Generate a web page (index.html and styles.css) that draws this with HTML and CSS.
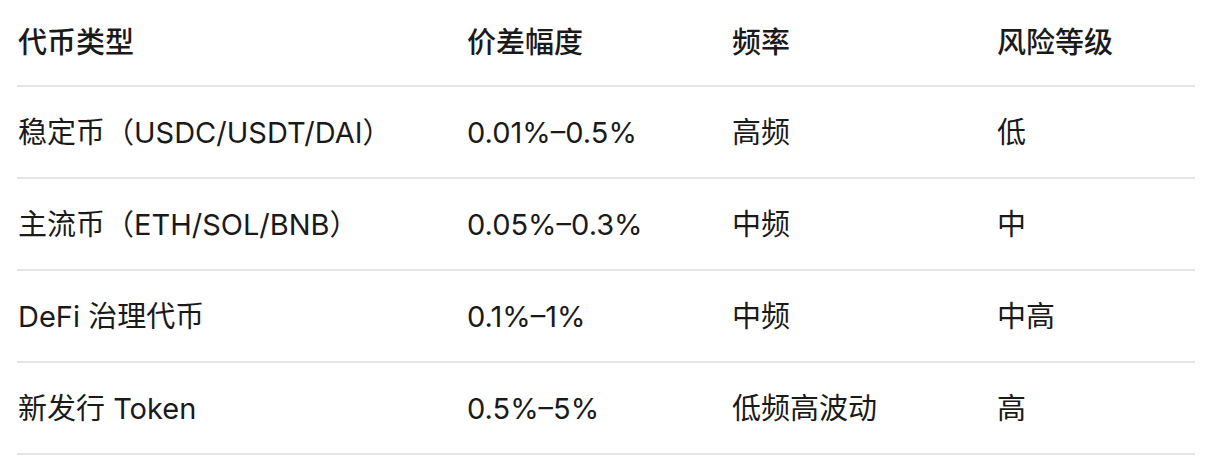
FILE: index.html
```html
<!DOCTYPE html>
<html lang="zh-CN">
<head>
<meta charset="utf-8">
<link rel="stylesheet" href="styles.css">
</head>
<body>
<table class="tbl">
  <thead>
    <tr><th class="c1">代币类型</th><th class="c2">价差幅度</th><th class="c3">频率</th><th class="c4">风险等级</th></tr>
  </thead>
  <tbody>
    <tr><td>稳定币（USDC/USDT/DAI）</td><td>0.01%–0.5%</td><td>高频</td><td>低</td></tr>
    <tr><td>主流币（ETH/SOL/BNB）</td><td>0.05%–0.3%</td><td>中频</td><td>中</td></tr>
    <tr><td>DeFi 治理代币</td><td>0.1%–1%</td><td>中频</td><td>中高</td></tr>
    <tr><td>新发行 Token</td><td>0.5%–5%</td><td>低频高波动</td><td>高</td></tr>
  </tbody>
</table>
</body>
</html>
```
FILE: styles.css
```css
html, body { margin: 0; padding: 0; background: #fff; }
body {
  padding: 0 17px;
  font-family: Inter, "Noto Sans CJK SC", sans-serif;
  color: #1a1a1a;
  font-size: 29px;
}
.tbl {
  width: 1178px;
  border-collapse: collapse;
  table-layout: fixed;
}
.tbl th, .tbl td {
  text-align: left;
  padding: 0 0 0 1px;
  border-bottom: 2px solid #e5e5e5;
  line-height: 44px;
  white-space: nowrap;
}
.tbl th {
  font-weight: 500;
  height: 85px;
}
.tbl td {
  font-weight: 400;
  height: 88px;
  padding-top: 2px;
}
.c1 { width: 448px; }
.c2 { width: 264px; }
.c3 { width: 264px; }
```
